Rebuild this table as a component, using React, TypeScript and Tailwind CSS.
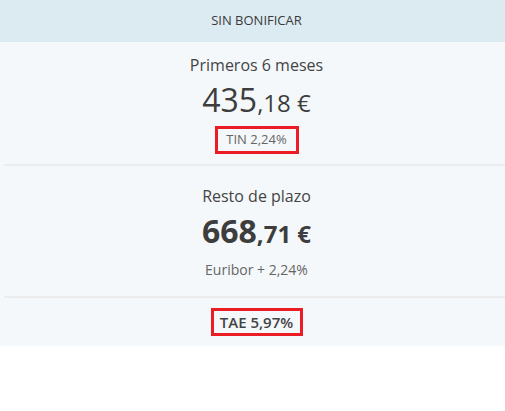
import React from 'react'

const Price = ({ whole, cents, bold }: { whole: string; cents: string; bold?: boolean }) => (
  <div
    className={`mt-[7px] h-[36px] leading-[36px] text-[#3d3d3d] ${bold ? 'font-bold' : 'font-normal'}`}
  >
    <span className="text-[32px]">{whole}</span>
    <span className="text-[24px]">,{cents} €</span>
  </div>
)

export default function App() {
  return (
    <div className="w-[505px] h-[411px] bg-white font-['Open_Sans',sans-serif]">
      {/* Header */}
      <div className="h-[42px] pl-2 bg-[#dcebf1] flex items-center justify-center text-[13px] font-medium text-[#3a3a3a]">
        SIN BONIFICAR
      </div>

      <div className="bg-[#f4f8fb]">
        {/* Primeros 6 meses */}
        <div className="flex flex-col items-center pl-2 pt-[13px] pb-[10px]">
          <div className="h-[20px] leading-[20px] text-[16px] text-[#444]">Primeros 6 meses</div>
          <Price whole="435" cents="18" />
          <div className="mt-[8px] w-[84px] h-[28px] border-[3px] border-[#ec1c24] flex items-center justify-center text-[13px] text-[#666]">
            TIN 2,24%
          </div>
        </div>
        <div className="ml-1 h-[2px] bg-[#ececec]" />

        {/* Resto de plazo */}
        <div className="flex flex-col items-center pl-2 pt-[20px] pb-[17px]">
          <div className="h-[20px] leading-[20px] text-[16px] text-[#444]">Resto de plazo</div>
          <Price whole="668" cents="71" bold />
          <div className="mt-[12px] h-[18px] leading-[18px] text-[14px] text-[#666]">Euribor + 2,24%</div>
        </div>
        <div className="ml-1 h-[2px] bg-[#ececec]" />

        {/* TAE */}
        <div className="flex justify-center pl-2 pt-[10px] pb-[10px]">
          <div className="w-[92px] h-[28px] border-[3px] border-[#ec1c24] flex items-center justify-center text-[15px] font-semibold text-[#444]">
            TAE 5,97%
          </div>
        </div>
      </div>
    </div>
  )
}
